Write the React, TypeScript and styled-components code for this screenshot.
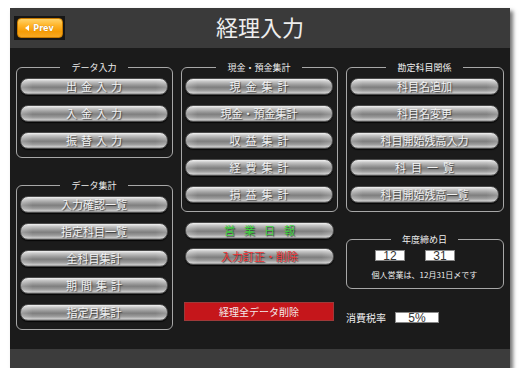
import React from 'react';
import styled, { createGlobalStyle } from 'styled-components';

const GlobalStyle = createGlobalStyle`
  body {
    margin: 0;
    background: #fff;
    font-family: "Noto Sans CJK JP", "DejaVu Sans", sans-serif;
  }
`;

const Frame = styled.div`
  margin: 8px 0 0 10px;
  width: 500px;
  height: 360px;
  display: flex;
  flex-direction: column;
  box-shadow: 3px 3px 4px rgba(0, 0, 0, 0.55);
`;

const Header = styled.header`
  height: 40px;
  background: #3a3a3a;
  display: grid;
  grid-template-columns: 1fr auto 1fr;
  align-items: center;
  padding: 0 4px;
`;

const PrevWell = styled.div`
  width: 51px;
  height: 24px;
  background: #161616;
  display: flex;
  align-items: center;
  justify-content: center;
`;

const PrevButton = styled.button`
  width: 46px;
  height: 20px;
  border: 1px solid #c77a00;
  border-radius: 4px;
  padding: 0;
  background: linear-gradient(to bottom, #ffd36a 0%, #ffb52a 35%, #f59c06 70%, #f6a823 100%);
  color: #fff;
  font-family: "DejaVu Sans", sans-serif;
  font-weight: bold;
  font-size: 8px;
  display: flex;
  align-items: center;
  justify-content: center;
  gap: 4px;
  text-shadow: 0 0 1px rgba(120, 60, 0, 0.6);
`;

const Title = styled.h1`
  margin: 0 0 4px 0;
  font-size: 22px;
  font-weight: normal;
  color: #eee;
`;

const Main = styled.main`
  flex: 1;
  background: #1b1b1b;
  display: grid;
  grid-template-columns: 157px 157px 158px;
  column-gap: 8px;
  padding: 14px 6px 0 6px;
  align-items: start;
`;

const Column = styled.div`
  display: flex;
  flex-direction: column;
`;

const Group = styled.fieldset<{ $gap?: number }>`
  margin: ${p => p.$gap ?? 0}px 0 0 0;
  border: 1px solid #a8a8a8;
  border-radius: 6px;
  padding: 5px 4px 8px 3px;
  min-width: 0;
`;

const Legend = styled.legend`
  margin: 0 auto;
  padding: 0 11px;
  font-size: 9px;
  line-height: 11px;
  color: #eee;
`;

const Stack = styled.div`
  display: flex;
  flex-direction: column;
  gap: 10px;
`;

const Button = styled.button<{ $spacing?: number; $tone?: 'green' | 'red' }>`
  height: 17px;
  border: 1px solid #4a4a4a;
  border-radius: 8px;
  padding: 0 0 1px 0;
  background:
    linear-gradient(to right, rgba(255, 255, 255, 0.25), transparent 8%, transparent 92%, rgba(255, 255, 255, 0.2)),
    linear-gradient(to bottom, #f2f2f2 0%, #c6c6c6 16%, #9c9c9c 38%, #7f7f7f 55%, #999 75%, #c9c9c9 92%, #8a8a8a 100%);
  box-shadow: 0 1px 1px rgba(0, 0, 0, 0.8);
  font-family: "Noto Sans CJK JP", sans-serif;
  font-size: 11px;
  line-height: 14px;
  letter-spacing: ${p => p.$spacing ?? 0}px;
  text-indent: ${p => p.$spacing ?? 0}px;
  color: ${p => (p.$tone === 'green' ? '#3fd13f' : p.$tone === 'red' ? '#ee3434' : '#f2f2f2')};
  text-shadow: 1px 1px 1px rgba(40, 40, 40, 0.8);
`;

const Loose = styled.div`
  display: flex;
  flex-direction: column;
  gap: 9px;
  margin-top: 10px;
  padding: 0 4px;
`;

const DangerBar = styled.div`
  margin: 37px 4px 0 3px;
  height: 17px;
  background: #c5161b;
  border: 1px solid #9e3a3a;
  color: #f4eaea;
  font-size: 10px;
  line-height: 17px;
  text-align: center;
`;

const DateRow = styled.div`
  display: flex;
  gap: 20px;
  padding-left: 25px;
`;

const ValueBox = styled.div<{ $width: number }>`
  width: ${p => p.$width}px;
  height: 11px;
  background: #fff;
  border: 1px solid #888;
  box-sizing: border-box;
  color: #333;
  font-family: "Liberation Sans", sans-serif;
  font-size: 12px;
  line-height: 10px;
  text-align: center;
`;

const Note = styled.div`
  margin-top: 8px;
  font-size: 8px;
  line-height: 11px;
  color: #eee;
  text-align: center;
`;

const TaxRow = styled.div`
  margin-top: 21px;
  display: flex;
  align-items: center;
  gap: 9px;
  font-size: 10px;
  color: #eee;
`;

const Footer = styled.footer`
  height: 19px;
  background: #3c3c3c;
`;

const dataInput = [
  { label: '出金入力', s: 4 },
  { label: '入金入力', s: 4 },
  { label: '振替入力', s: 4 },
];

const dataSum = [
  { label: '入力確認一覧', s: 0 },
  { label: '指定科目一覧', s: 0 },
  { label: '全科目集計', s: 0 },
  { label: '期間集計', s: 4 },
  { label: '指定月集計', s: 0 },
];

const cashSum = [
  { label: '現金集計', s: 5 },
  { label: '現金・預金集計', s: 0 },
  { label: '収益集計', s: 5 },
  { label: '経費集計', s: 5 },
  { label: '損益集計', s: 5 },
];

const accounts = [
  { label: '科目名追加', s: 0 },
  { label: '科目名変更', s: 0 },
  { label: '科目開始残高入力', s: 0 },
  { label: '科目一覧', s: 5 },
  { label: '科目開始残高一覧', s: 0 },
];

const renderButtons = (list: { label: string; s: number }[]) =>
  list.map(b => (
    <Button key={b.label} $spacing={b.s}>
      {b.label}
    </Button>
  ));

const App: React.FC = () => {
  return (
    <>
      <GlobalStyle />
      <Frame>
        <Header>
          <PrevWell>
            <PrevButton>
              <svg width="4" height="6" viewBox="0 0 4 6">
                <path d="M4 0 L0 3 L4 6 Z" fill="#fff" />
              </svg>
              Prev
            </PrevButton>
          </PrevWell>
          <Title>経理入力</Title>
          <div />
        </Header>
        <Main>
          <Column>
            <Group>
              <Legend>データ入力</Legend>
              <Stack>{renderButtons(dataInput)}</Stack>
            </Group>
            <Group $gap={22}>
              <Legend>データ集計</Legend>
              <Stack>{renderButtons(dataSum)}</Stack>
            </Group>
          </Column>
          <Column>
            <Group>
              <Legend>現金・預金集計</Legend>
              <Stack>{renderButtons(cashSum)}</Stack>
            </Group>
            <Loose>
              <Button $spacing={9} $tone="green">営業日報</Button>
              <Button $tone="red">入力訂正・削除</Button>
            </Loose>
            <DangerBar>経理全データ削除</DangerBar>
          </Column>
          <Column>
            <Group>
              <Legend>勘定科目関係</Legend>
              <Stack>{renderButtons(accounts)}</Stack>
            </Group>
            <Group $gap={22}>
              <Legend>年度締め日</Legend>
              <DateRow>
                <ValueBox $width={30}>12</ValueBox>
                <ValueBox $width={30}>31</ValueBox>
              </DateRow>
              <Note>個人営業は、12月31日〆です</Note>
            </Group>
            <TaxRow>
              消費税率
              <ValueBox $width={44}>5%</ValueBox>
            </TaxRow>
          </Column>
        </Main>
        <Footer />
      </Frame>
    </>
  );
};

export default App;
